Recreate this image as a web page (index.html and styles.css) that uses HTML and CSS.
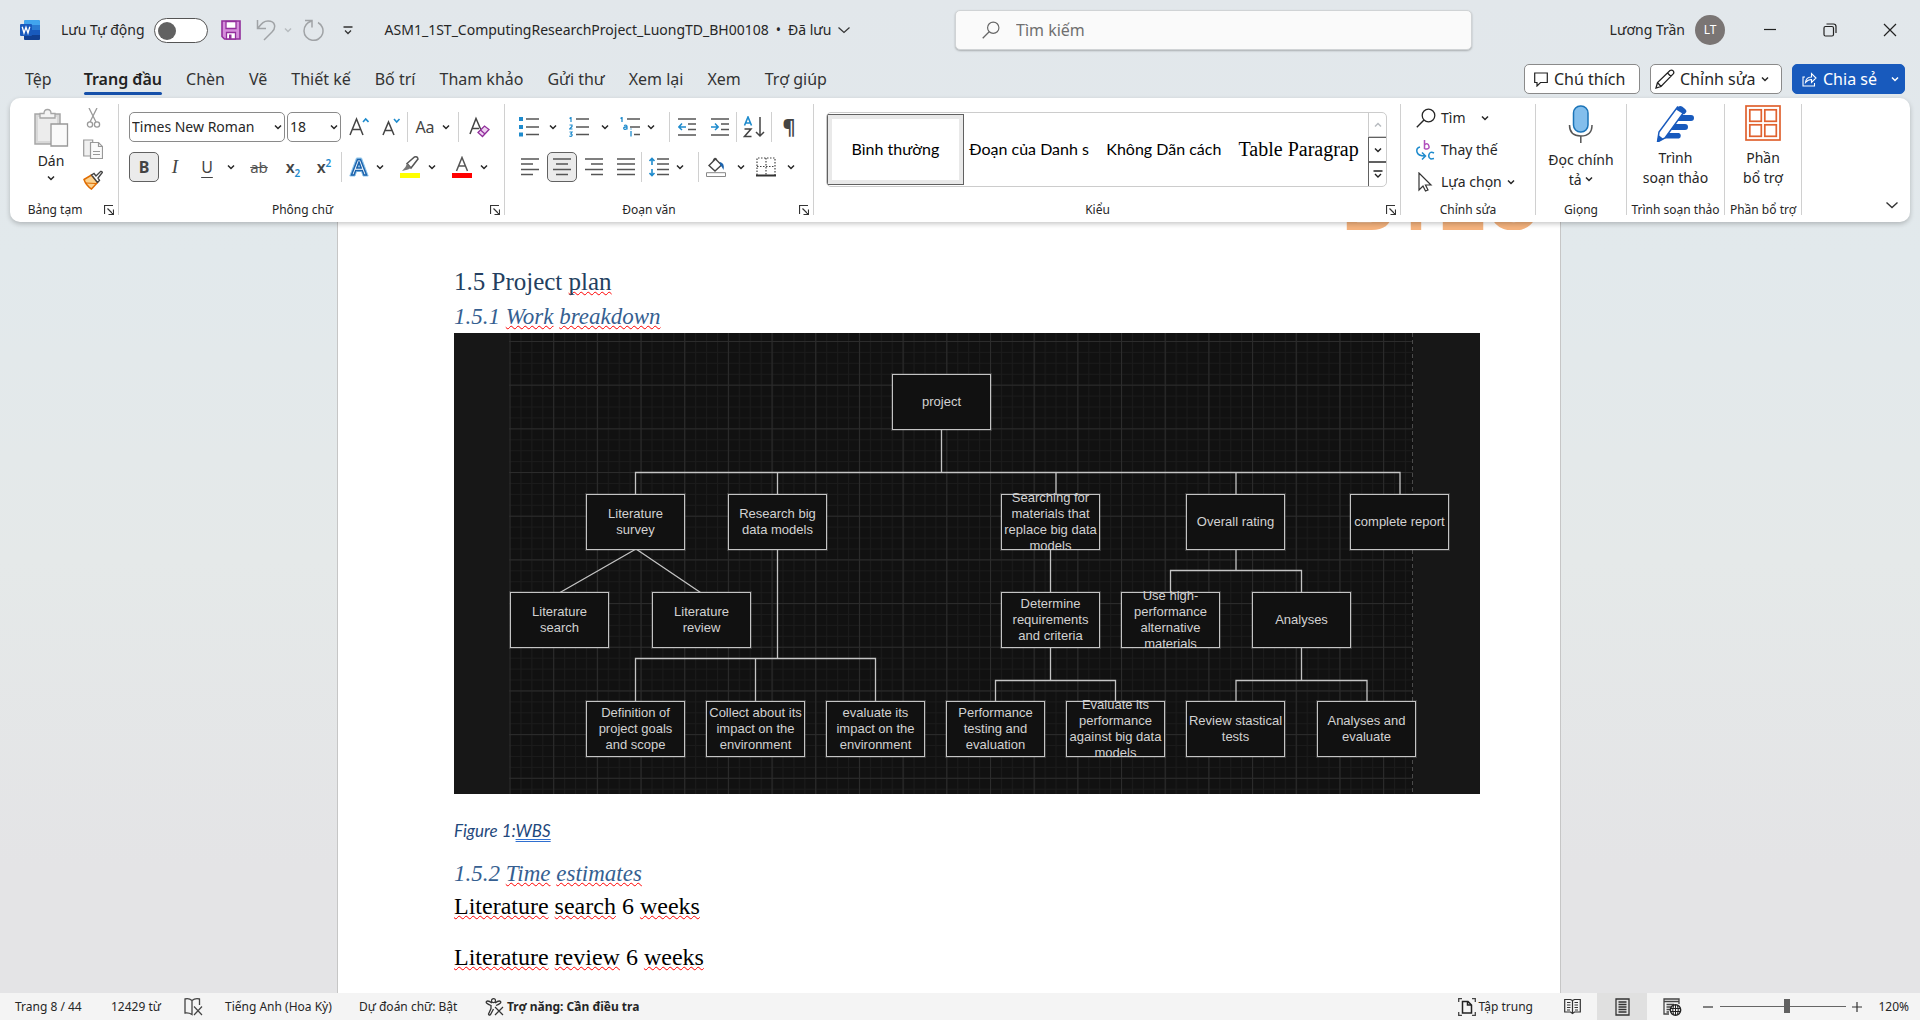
FILE: index.html
```html
<!DOCTYPE html>
<html lang="vi">
<head>
<meta charset="utf-8">
<meta name="viewport" content="width=device-width, initial-scale=1">
<title>ASM1_1ST_ComputingResearchProject_LuongTD_BH00108 - Word</title>
<link rel="stylesheet" href="styles.css">
</head>
<body>
<svg class="defs" width="0" height="0" aria-hidden="true">
  <symbol id="chev" viewBox="0 0 8 8"><path d="M1 2.5 4 5.5 7 2.5" fill="none" stroke="currentColor" stroke-width="1.5"/></symbol>
  <symbol id="launch" viewBox="0 0 10 10"><path d="M.5 9V.5H9M3.500 3.500 9 9M9.500 4.500V9.500H4.500" fill="none" stroke="#333" stroke-width="1.200"/></symbol>
  <symbol id="lens" viewBox="0 0 20 20"><circle cx="12.500" cy="7.500" r="6.300" fill="none" stroke="currentColor" stroke-width="1.300"/><path d="M8 12 .8 19.200" stroke="currentColor" stroke-width="1.400"/></symbol>
</svg>
<div class="app">
  <header class="titlebar">
    <div class="title-left">
      <svg class="word" width="20" height="20" viewBox="0 0 20 20"><rect x="4" width="16" height="20" rx="1.500" fill="#2b7cd3"/><path d="M4 1.500Q4 0 5.500 0h13Q20 0 20 1.500V5H4z" fill="#41a5ee"/><path d="M4 5h16v5H4z" fill="#2b7cd3"/><path d="M4 10h16v5H4z" fill="#185abd"/><path d="M4 15h16v3.500q0 1.500-1.500 1.500h-13Q4 20 4 18.500z" fill="#103f91"/><rect y="4" width="12" height="12" rx="1" fill="#185abd"/><path d="M2.200 6.800 4 13 6 7.200 8 13 9.800 6.800" fill="none" stroke="#fff" stroke-width="1.300"/></svg>
      <label class="autosave"><span>Lưu Tự động</span><input type="checkbox" class="toggle"></label>
      <button class="plain" aria-label="Lưu"><svg width="20" height="20" viewBox="0 0 20 20"><path d="M1 1h18v18H3.500L1 16.500z" fill="#d58edb" stroke="#922f9c" stroke-width="1.600"/><path d="M5 1.500h10v7H5z" fill="#fff" stroke="#922f9c" stroke-width="1.300"/><path d="M5.500 19v-6.500h9V19z" fill="#fff" stroke="#922f9c" stroke-width="1.300"/><path d="M8 14.500h2.500V19H8z" fill="#922f9c"/></svg></button>
      <button class="plain undo" aria-label="Hoàn tác"><svg width="20" height="22" viewBox="0 0 20 22"><path d="M1.500 1v8.500H10M2 9C6 4 8 2 12 2c8 0 8 7 4 11l-8 8" fill="none" stroke="#a0a3a6" stroke-width="1.500"/></svg><svg class="c faint" width="8" height="8"><use href="#chev"/></svg></button>
      <button class="plain redo" aria-label="Làm lại"><svg width="22" height="22" viewBox="0 0 22 22"><path d="M2 1.500h7v7M8.500 2C3 4 1 8 1 12a9.500 9.500 0 1 0 14-8.500" fill="none" stroke="#a0a3a6" stroke-width="1.500"/></svg></button>
      <button class="plain more" aria-label="Tùy chỉnh"><svg width="10" height="9" viewBox="0 0 10 9"><path d="M.5 1h9M2 4.500l3 3 3-3" fill="none" stroke="#333" stroke-width="1.300"/></svg></button>
      <button class="plain filename">ASM1_1ST_ComputingResearchProject_LuongTD_BH00108 <span class="dot">•</span> Đã lưu<svg width="12" height="8" viewBox="0 0 12 8"><path d="M.5 1.500 6 6.500l5.500-5" fill="none" stroke="#333" stroke-width="1.200"/></svg></button>
    </div>
    <label class="search"><svg width="18" height="18"><use href="#lens"/></svg><input type="text" placeholder="Tìm kiếm" aria-label="Tìm kiếm"></label>
    <div class="title-right">
      <span>Lương Trần</span><span class="avatar">LT</span>
      <button class="plain win" aria-label="Thu nhỏ"><svg width="14" height="14" viewBox="0 0 14 14"><path d="M1 6.500h12" stroke="#222" stroke-width="1.200"/></svg></button>
      <button class="plain win" aria-label="Khôi phục"><svg width="14" height="14" viewBox="0 0 14 14"><rect x="1" y="3.500" width="9.500" height="9.500" rx="1.500" fill="none" stroke="#222" stroke-width="1.200"/><path d="M3.500 1h7q2.500 0 2.500 2.500V10" fill="none" stroke="#222" stroke-width="1.200"/></svg></button>
      <button class="plain win" aria-label="Đóng"><svg width="14" height="14" viewBox="0 0 14 14"><path d="M1 1l12 12M13 1 1 13" stroke="#222" stroke-width="1.200"/></svg></button>
    </div>
  </header>

  <nav class="tabs">
    <button class="tab first">Tệp</button><button class="tab active">Trang đầu</button><button class="tab">Chèn</button><button class="tab">Vẽ</button><button class="tab">Thiết kế</button><button class="tab">Bố trí</button><button class="tab">Tham khảo</button><button class="tab">Gửi thư</button><button class="tab">Xem lại</button><button class="tab">Xem</button><button class="tab">Trợ giúp</button>
    <div class="tab-actions">
      <button class="pill comment"><svg width="14" height="15" viewBox="0 0 14 15"><path d="M.7 1h12.600v9.500H6.500L3 14v-3.500H.7z" fill="none" stroke="#222" stroke-width="1.200"/></svg>Chú thích</button>
      <button class="pill edit"><svg width="20" height="20" viewBox="0 0 20 20"><path d="M1 19l1.500-5.500L15 1.500q1.800-1 3.200.4 1.200 1.500 0 3L6 17.500zM2.500 13.500 6 17.500M12.500 4l3.500 3.500" fill="none" stroke="#222" stroke-width="1.300"/></svg>Chỉnh sửa<svg width="8" height="8"><use href="#chev"/></svg></button>
      <button class="pill share"><svg width="15" height="15" viewBox="0 0 15 15"><path d="M3 5H1v9h11.500v-3M3.500 10.500Q4 5 9.500 5V1.500L14 6 9.500 10.500V7.500Q6 7.500 3.500 10.500z" fill="none" stroke="#fff" stroke-width="1.100"/></svg>Chia sẻ<svg class="end" width="8" height="8"><use href="#chev"/></svg></button>
    </div>
  </nav>

  <section class="ribbon" aria-label="Trang đầu">
    <div class="group clipboard">
      <div class="body row-body">
        <button class="big paste"><svg width="36" height="40" viewBox="0 0 36 40"><path d="M2 6h25v30H2z" fill="#d8d8d8" stroke="#a6a6a6" stroke-width="1.500"/><path d="M5 9h19v24H5z" fill="#ececec"/><path d="M7 10V5.500h4Q11 1.500 14.500 1.500T18 5.500h4V10z" fill="#f3f3f3" stroke="#a6a6a6" stroke-width="1.300"/><path d="M18 16h16.500v22H18z" fill="#fafafa" stroke="#999" stroke-width="1.300"/></svg><span>Dán</span><svg width="8" height="8"><use href="#chev"/></svg></button>
        <div class="stack">
          <button class="ib" aria-label="Cắt"><svg width="20" height="20" viewBox="0 0 20 20"><path d="M6 0l7 14M14 0 7 14" stroke="#999" stroke-width="1.300"/><g fill="none" stroke="#999" stroke-width="1.300"><circle cx="7" cy="16.500" r="2.600"/><circle cx="14" cy="16.500" r="2.600"/></g></svg></button>
          <button class="ib" aria-label="Sao chép"><svg width="20" height="20" viewBox="0 0 20 20"><path d="M.7 1h9v16h-9z" fill="#f0f0f0" stroke="#999" stroke-width="1.200"/><path d="M7.500 3.500h8l4 4v12h-12z" fill="#fafafa" stroke="#999" stroke-width="1.200"/><path d="M15.500 3.500v4h4M10 12.500h7M10 15.500h7" fill="none" stroke="#999" stroke-width="1.200"/></svg></button>
          <button class="ib" aria-label="Bút chép định dạng"><svg width="20" height="20" viewBox="0 0 20 20"><path d="M1 9.500 8.500 5l6 7.500-6 6.500Q3 15.500 1 9.500z" fill="#fbd28f" stroke="#e06c00" stroke-width="1.500"/><path d="M3 13l10 .5" stroke="#e06c00"/><path d="M8.500 5 11 3.500l2 2.500 4.500-4.500q1.500-.5 1.800 1L15 8l1.500 2.500-2 2z" fill="#fff" stroke="#444" stroke-width="1.400"/></svg></button>
        </div>
      </div>
      <div class="glabel has"><span>Bảng tạm</span><button class="launch" aria-label="Bảng tạm"><svg width="10" height="10"><use href="#launch"/></svg></button></div>
    </div>

    <div class="group font">
      <div class="body">
        <div class="line">
          <span class="combo face"><select aria-label="Phông chữ"><option>Times New Roman</option></select><svg width="8" height="8"><use href="#chev"/></svg></span>
          <span class="combo size"><select aria-label="Cỡ chữ"><option>18</option></select><svg width="8" height="8"><use href="#chev"/></svg></span>
          <button class="ib w32" aria-label="Tăng cỡ"><svg width="20" height="22" viewBox="0 0 20 22"><path d="M1 19 7.500 3 14 19M3.500 13.500h8" fill="none" stroke="#444" stroke-width="1.500"/><path d="M14 6l2.700-3L19.500 6" fill="none" stroke="#1e8bcd" stroke-width="1.600"/></svg></button>
          <button class="ib w32" aria-label="Giảm cỡ"><svg width="20" height="22" viewBox="0 0 20 22"><path d="M2 19 7.500 6 13 19M4 14.500h7" fill="none" stroke="#444" stroke-width="1.500"/><path d="M13 3l2.700 3L18.500 3" fill="none" stroke="#1e8bcd" stroke-width="1.600"/></svg></button>
          <i class="sep"></i>
          <button class="ib w34 glyph">Aa</button><button class="ib w16 st" aria-label="Chữ hoa"><svg width="8" height="8"><use href="#chev"/></svg></button>
          <i class="sep"></i>
          <button class="ib w40" aria-label="Xóa định dạng"><svg width="21" height="22" viewBox="0 0 21 22"><path d="M1 18 7 2.500 12 14M3 12.500h7" fill="none" stroke="#444" stroke-width="1.500"/><path d="M9 16.500 15.500 10 20 13.500 13.500 20.500zM11.500 14l4.500 4" fill="#eed3f1" stroke="#922f9c" stroke-width="1.300"/></svg></button>
        </div>
        <div class="line">
          <button class="ib w30 on bold">B</button><button class="ib w32 mono-i">I</button><button class="ib w32 under">U</button><button class="ib w16" aria-label="Kiểu gạch chân"><svg width="8" height="8"><use href="#chev"/></svg></button>
          <button class="ib w40 strike">ab</button><button class="ib w28 script"><span>x<sub>2</sub></span></button><button class="ib w34 script"><span>x<sup>2</sup></span></button>
          <i class="sep"></i>
          <button class="ib w34" aria-label="Hiệu ứng chữ"><svg width="20" height="20" viewBox="0 0 20 20"><path d="M.8 19 7.500 1h5L19.200 19H14l-1.500-4.500h-5L6 19z" fill="#8fc4ea" stroke="#8fc4ea"/><path d="M2.500 18 8.500 2.500h3L17.500 18H15l-1.700-4.500H6.700L5 18zM7.800 11h4.400L10 5z" fill="#fff" stroke="#1b63ad" stroke-width="1.500"/></svg></button><button class="ib w16 st" aria-label="Hiệu ứng"><svg width="8" height="8"><use href="#chev"/></svg></button>
          <button class="ib w36" aria-label="Màu tô sáng"><svg width="20" height="22" viewBox="0 0 20 22"><path d="M7 7.500 14.500 1q3-1 3.500 2L11 12z" fill="#fff" stroke="#555" stroke-width="1.500"/><path d="M7 7.500l4 4.500-3 1.500L2 15l3.500-4z" fill="#777"/><path d="M0 17h20v5H0z" fill="#ff0"/></svg></button><button class="ib w16 st" aria-label="Màu"><svg width="8" height="8"><use href="#chev"/></svg></button>
          <button class="ib w36" aria-label="Màu chữ"><svg width="20" height="22" viewBox="0 0 20 22"><path d="M4.500 15 10 1.500 15.500 15M6.500 10h7" fill="none" stroke="#555" stroke-width="1.500"/><path d="M0 17h20v5H0z" fill="red"/></svg></button><button class="ib w16 st" aria-label="Màu"><svg width="8" height="8"><use href="#chev"/></svg></button>
        </div>
      </div>
      <div class="glabel has"><span>Phông chữ</span><button class="launch" aria-label="Phông chữ"><svg width="10" height="10"><use href="#launch"/></svg></button></div>
    </div>

    <div class="group para">
      <div class="body">
        <div class="line">
          <button class="ib w32" aria-label="Dấu đầu dòng"><svg width="20" height="20" viewBox="0 0 20 20"><path d="M0 0h4v4H0zM0 8h4v4H0zM0 15.500h4v4H0z" fill="#1e8bcd"/><path d="M7 2h13M7 10h13M7 17.500h13" stroke="#555" stroke-width="1.500"/></svg></button><button class="ib w16" aria-label="Dấu"><svg width="8" height="8"><use href="#chev"/></svg></button>
          <button class="ib w36" aria-label="Đánh số"><svg width="20" height="20" viewBox="0 0 20 20"><path d="M.5 1.500 2 .5v4.500M.5 8h2.500v1.500L.7 12H3.500M.5 15H3l-1.200 2q1.700 0 1.200 1.500T.3 19" fill="none" stroke="#1e8bcd" stroke-width="1.200"/><path d="M7 2h13M7 10h13M7 17.500h13" stroke="#555" stroke-width="1.500"/></svg></button><button class="ib w16" aria-label="Số"><svg width="8" height="8"><use href="#chev"/></svg></button>
          <button class="ib w34" aria-label="Danh sách đa mức"><svg width="20" height="20" viewBox="0 0 20 20"><path d="M.5 1.500 2 .5v4.500M4 8.500q3-1 3 1v3M7 10H5q-2 .5-1 2 1.500 1 3-.5M11 14v5.500M11 11.500v1" fill="none" stroke="#1e8bcd" stroke-width="1.300"/><path d="M7 2h13M10 10h10M14 17.500h6" stroke="#555" stroke-width="1.500"/></svg></button><button class="ib w16 st" aria-label="Mức"><svg width="8" height="8"><use href="#chev"/></svg></button>
          <i class="sep l6"></i>
          <button class="ib w34" aria-label="Giảm thụt lề"><svg width="18" height="20" viewBox="0 0 18 20"><path d="M0 2h18M10 7h8M10 12.500h8M0 18h18" stroke="#555" stroke-width="1.500"/><path d="M8 10H1M4 6.500.8 10 4 13" fill="none" stroke="#1e8bcd" stroke-width="1.500"/></svg></button><button class="ib w32" aria-label="Tăng thụt lề"><svg width="18" height="20" viewBox="0 0 18 20"><path d="M0 2h18M10 7h8M10 12.500h8M0 18h18" stroke="#555" stroke-width="1.500"/><path d="M0 10h7M4 6.500 7.200 10 4 13" fill="none" stroke="#1e8bcd" stroke-width="1.500"/></svg></button>
          <i class="sep"></i>
          <button class="ib w34" aria-label="Sắp xếp"><svg width="22" height="22" viewBox="0 0 22 22"><path d="M1.500 9.500 5 1l3.500 8.500M2.500 7h5" fill="none" stroke="#1e8bcd" stroke-width="1.600"/><path d="M1.500 13H8l-6.500 7.500H8.500M17 1v19M13 16l4 4 4-4" fill="none" stroke="#444" stroke-width="1.500"/></svg></button>
          <i class="sep"></i>
          <button class="ib w34 pilcrow">¶</button>
        </div>
        <div class="line">
          <button class="ib w34" aria-label="Căn trái"><svg width="18" height="20" viewBox="0 0 18 20"><path d="M0 2h18M0 7h12M0 12.500h18M0 17.500h12" stroke="#555" stroke-width="1.500"/></svg></button><button class="ib w30 on" aria-label="Căn giữa"><svg width="18" height="20" viewBox="0 0 18 20"><path d="M0 2h18M3 7h12M0 12.500h18M3 17.500h12" stroke="#555" stroke-width="1.500"/></svg></button><button class="ib w34" aria-label="Căn phải"><svg width="18" height="20" viewBox="0 0 18 20"><path d="M0 2h18M6 7h12M0 12.500h18M6 17.500h12" stroke="#555" stroke-width="1.500"/></svg></button><button class="ib w30" aria-label="Căn đều"><svg width="18" height="20" viewBox="0 0 18 20"><path d="M0 2h18M0 7h18M0 12.500h18M0 17.500h18" stroke="#555" stroke-width="1.500"/></svg></button>
          <i class="sep"></i>
          <button class="ib w34" aria-label="Giãn cách"><svg width="20" height="20" viewBox="0 0 20 20"><path d="M3 1.500V8M.5 4 3 1.500 5.500 4M3 12v6.500M.5 16 3 18.500 5.500 16" fill="none" stroke="#1e8bcd" stroke-width="1.600"/><path d="M8 2h12M8 7h12M8 12.500h12M8 17.500h12" stroke="#555" stroke-width="1.500"/></svg></button><button class="ib w16 st" aria-label="Cách"><svg width="8" height="8"><use href="#chev"/></svg></button>
          <i class="sep l6"></i>
          <button class="ib w34" aria-label="Tô bóng"><svg width="20" height="20" viewBox="0 0 20 20"><path d="M3 8.500 9.500 2l6 6L9 14zM7 4.500Q9-1 11 3.500" fill="none" stroke="#444" stroke-width="1.400"/><path d="M14 5q5 1 3.500 8-1-3-3.500-5z" fill="#1b63ad"/><path d="M.5 15.700h19v3.800H.5z" fill="#fff" stroke="#888"/></svg></button><button class="ib w16" aria-label="Bóng"><svg width="8" height="8"><use href="#chev"/></svg></button>
          <button class="ib w34" aria-label="Viền"><svg width="20" height="20" viewBox="0 0 20 20"><path d="M1 18V1h18v17M10 1v17M1 9.500h18" fill="none" stroke="#444" stroke-width="1.200" stroke-dasharray="1.500 1.500"/><path d="M0 18.500h20" stroke="#333" stroke-width="2"/></svg></button><button class="ib w16" aria-label="Kiểu viền"><svg width="8" height="8"><use href="#chev"/></svg></button>
        </div>
      </div>
      <div class="glabel has"><span>Đoạn văn</span><button class="launch" aria-label="Đoạn văn"><svg width="10" height="10"><use href="#launch"/></svg></button></div>
    </div>

    <div class="group styles">
      <div class="body">
        <div class="gallery">
          <button class="style sel"><span>Bình thường</span></button>
          <button class="style"><span>Đoạn của Danh s</span></button>
          <button class="style"><span>Không Dãn cách</span></button>
          <button class="style serif"><span>Table Paragrap</span></button>
          <div class="scroller">
            <button class="faint" aria-label="Lên"><svg class="up" width="8" height="8"><use href="#chev"/></svg></button>
            <button aria-label="Xuống"><svg width="8" height="8"><use href="#chev"/></svg></button>
            <button aria-label="Thêm"><svg width="10" height="9" viewBox="0 0 10 9"><path d="M.5 1h9M2 4l3 3 3-3" fill="none" stroke="#222" stroke-width="1.400"/></svg></button>
          </div>
        </div>
      </div>
      <div class="glabel has"><span>Kiểu</span><button class="launch" aria-label="Kiểu"><svg width="10" height="10"><use href="#launch"/></svg></button></div>
    </div>

    <div class="group editing">
      <div class="body">
        <button class="cmd"><svg width="20" height="20"><use href="#lens"/></svg><span>Tìm</span><svg class="far" width="8" height="8"><use href="#chev"/></svg></button>
        <button class="cmd"><svg width="20" height="20" viewBox="0 0 20 20"><path d="M8.500 0v9M8.500 5q1-1.500 2.500-1.300T13 6.300 11 9t-2.500-1" fill="none" stroke="#b04fbd" stroke-width="1.500"/><path d="M18 13q-4-2-5 1.500t2 4.500l3-.5M4 7Q0 8 1 12t8 4M6 12.500l3.500 3.500L6 19.500" fill="none" stroke="#1e8bcd" stroke-width="1.500"/></svg><span>Thay thế</span></button>
        <button class="cmd"><svg width="20" height="20" viewBox="0 0 20 20"><path d="M3 1v17l4-4 2.500 5 2.500-1-2.500-5H15z" fill="none" stroke="#333" stroke-width="1.200"/></svg><span>Lựa chọn</span><svg width="8" height="8"><use href="#chev"/></svg></button>
      </div>
      <div class="glabel"><span>Chỉnh sửa</span></div>
    </div>

    <div class="group voice">
      <div class="body"><button class="big"><svg width="26" height="40" viewBox="0 0 26 40"><rect x="5.500" y="2" width="14.500" height="26" rx="7" fill="#83beec" stroke="#1b74b8" stroke-width="1.500"/><path d="M1.500 21q0 11 11.300 11T24 21M12.800 32v7" fill="none" stroke="#555" stroke-width="1.500"/></svg><span class="two">Đọc chính<br>tả <svg width="8" height="8"><use href="#chev"/></svg></span></button></div>
      <div class="glabel"><span>Giọng</span></div>
    </div>

    <div class="group editor">
      <div class="body"><button class="big"><svg width="40" height="38" viewBox="0 0 40 38"><path d="M18 11h17a3 3 0 0 1 0 6H15M15 20h14a3 3 0 0 1 0 6H10M10 29h13a3 3 0 0 1 0 5.500H6z" fill="#185abd"/><path d="M21.500 3 28 8 9 34 1.500 38 3 28z" fill="#fff" stroke="#185abd" stroke-width="1.500"/><path d="M21 4q3-4 7 0 4 3 1.500 5L28 10.500l-8-5z" fill="#185abd"/><path d="M1 38.500 2.500 31l5 4z" fill="#185abd"/></svg><span class="two">Trình<br>soạn thảo</span></button></div>
      <div class="glabel"><span>Trình soạn thảo</span></div>
    </div>

    <div class="group addins">
      <div class="body"><button class="big"><svg width="36" height="38" viewBox="0 0 36 38"><g fill="none" stroke="#e0622f" stroke-width="1.700"><rect x="1" y="2" width="34" height="34"/><rect x="4.800" y="5.800" width="11.500" height="11.500"/><rect x="19.800" y="5.800" width="11.500" height="11.500"/><rect x="4.800" y="20.800" width="11.500" height="11.500"/><rect x="19.800" y="20.800" width="11.500" height="11.500"/></g></svg><span class="two">Phần<br>bổ trợ</span></button></div>
      <div class="glabel"><span>Phần bổ trợ</span></div>
    </div>

    <div class="ribbon-end"><button class="plain" aria-label="Thu gọn"><svg width="12" height="8" viewBox="0 0 12 8"><path d="M.5 1.500 6 6.500l5.500-5" fill="none" stroke="#333" stroke-width="1.400"/></svg></button></div>
  </section>

  <main class="workspace">
    <article class="page">
      <div class="logo"><span>BTEC</span></div>
      <h1>1.5 Project <u>plan</u></h1>
      <h2>1.5.1 <u>Work</u> <u>breakdown</u></h2>
      <figure>
        <div class="wbs">
          <svg class="edges" width="1026" height="461" viewBox="0 0 1026 461">
            <defs>
              <pattern id="minor" width="10.920" height="10.920" patternUnits="userSpaceOnUse" x="55.500" y="8"><path d="M.5 0v11M0 .5h11" stroke="#1b1b1b" fill="none"/></pattern>
              <pattern id="major" width="43.680" height="43.680" patternUnits="userSpaceOnUse" x="55.500" y="8"><path d="M.5 0v44M0 .5h44" stroke="#2c2c2c" fill="none"/></pattern>
            </defs>
            <rect width="1026" height="461" fill="#171717"/>
            <rect x="55" width="904" height="461" fill="#111"/>
            <rect x="55" width="904" height="461" fill="url(#minor)"/>
            <rect x="55" width="904" height="461" fill="url(#major)"/>
            <path d="M958.500 0v461" stroke="#4a4a4a" stroke-dasharray="4 3"/>
            <path d="M487.500 96v43.500M181.500 161v-21.500H946V161M323.500 140v21M602 140v21M782 140v21M182 216l-76 43.500M182 216l64.500 43.500M323.500 216v109M181.500 368v-42.500H421.500V368M301.500 325v43M596.500 216v43M596.500 314v33M541.500 368v-20.500H661.500V368M782 216v21.500M716.500 259v-21.500H847.500V259M847.500 314v33M782 368v-20.500H913V368" fill="none" stroke="#c4c4c4" stroke-width="1.300"/>
          </svg>
          <div class="node" style="left:438px;top:41px">project</div>
          <div class="node" style="left:132px;top:161px">Literature<br>survey</div>
          <div class="node" style="left:274px;top:161px">Research big data models</div>
          <div class="node" style="left:547px;top:161px">Searching for materials that replace big data models</div>
          <div class="node" style="left:732px;top:161px">Overall rating</div>
          <div class="node" style="left:896px;top:161px">complete report</div>
          <div class="node" style="left:56px;top:259px">Literature<br>search</div>
          <div class="node" style="left:198px;top:259px">Literature<br>review</div>
          <div class="node" style="left:547px;top:259px">Determine requirements and criteria</div>
          <div class="node" style="left:667px;top:259px">Use high-performance alternative materials</div>
          <div class="node" style="left:798px;top:259px">Analyses</div>
          <div class="node" style="left:132px;top:368px">Definition of project goals and scope</div>
          <div class="node" style="left:252px;top:368px">Collect about its impact on the environment</div>
          <div class="node" style="left:372px;top:368px">evaluate its impact on the environment</div>
          <div class="node" style="left:492px;top:368px">Performance testing and evaluation</div>
          <div class="node" style="left:612px;top:368px">Evaluate its performance against big data models</div>
          <div class="node" style="left:732px;top:368px">Review stastical tests</div>
          <div class="node" style="left:863px;top:368px">Analyses and evaluate</div>
        </div>
        <figcaption>Figure 1:<span>WBS</span></figcaption>
      </figure>
      <h2>1.5.2 <u>Time</u> <u>estimates</u></h2>
      <p><u>Literature</u> <u>search</u> 6 <u>weeks</u></p>
      <p><u>Literature</u> <u>review</u> 6 <u>weeks</u></p>
    </article>
  </main>

  <footer class="status">
    <span class="pg">Trang 8 / 44</span><span class="words">12429 từ</span>
    <svg class="proof" width="19" height="18" viewBox="0 0 19 18"><path d="M8 2.500Q5 0 1 1v14q4-.5 7 1.500V2.500Q11 0 15.500 1v6" fill="none" stroke="#444" stroke-width="1.300"/><path d="M10 8.500l8 8.500M18 8.500 10 17" stroke="#444" stroke-width="1.200"/></svg>
    <span class="lang">Tiếng Anh (Hoa Kỳ)</span><span class="predict">Dự đoán chữ: Bật</span>
    <svg width="19" height="18" viewBox="0 0 19 18"><circle cx="8.500" cy="2.700" r="2" fill="none" stroke="#333" stroke-width="1.200"/><path d="M7 5Q3 2 1.500 3.500T6 7.500v3L3.500 16q.5 2 2 .5L8.500 11M10 5q4-3 5.500-1.500T11 7.500" fill="none" stroke="#333" stroke-width="1.300"/><path d="M10 9l8 8M18 9l-8 8" stroke="#333" stroke-width="1.200"/></svg>
    <b class="acc">Trợ năng: Cần điều tra</b>
    <div class="status-right">
      <button class="focus"><svg width="18" height="18" viewBox="0 0 18 18"><path d="M.7 4V.7H4M14 .7h3.300V4M17.300 14v3.300H14M4 17.300H.7V14" fill="none" stroke="#444" stroke-width="1.300"/><path d="M4.500 3.500H10l3.500 3.500v8h-9zM9.500 3.500V7h4" fill="none" stroke="#222" stroke-width="1.500"/></svg>Tập trung</button>
      <button class="view" aria-label="Đọc"><svg width="17" height="17" viewBox="0 0 17 17"><path d="M.7 1.500h5.800l2 1 2-1h5.800v12.500h-5.800l-2 1.500-2-1.500H.7zM8.500 2.500v13M3 4.500h3.500M3 7h3.500M3 9.500h3.500M3 12h3M10.500 4.500H14M10.500 7H14M10.500 9.500H14M11 12h3" fill="none" stroke="#333" stroke-width="1.200"/></svg></button>
      <button class="view cur" aria-label="Bố trí in"><svg width="15" height="18" viewBox="0 0 15 18"><path d="M1 1h13v16H1zM3.500 4h8M3.500 6.500h8M3.500 9h8M3.500 11.500h8M3.500 14h8" fill="none" stroke="#333" stroke-width="1.300"/></svg></button>
      <button class="view" aria-label="Bố trí web"><svg width="19" height="18" viewBox="0 0 19 18"><path d="M6 16H1V1h15v5M1 3.500h15M3.500 6.500H11M3.500 9H8M3.500 11.500H7M3.500 14H6" fill="none" stroke="#444" stroke-width="1.300"/><circle cx="12.500" cy="12" r="5.200" fill="#f4f4f4" stroke="#222" stroke-width="1.400"/><path d="M7.500 10.500h10M7.500 13.500h10M12.500 7v10M10.500 7.500q-1.500 4.500 0 9M14.500 7.500q1.500 4.500 0 9" fill="none" stroke="#222"/></svg></button>
      <button class="zb minus" aria-label="Thu nhỏ"><svg width="10" height="10" viewBox="0 0 10 10"><path d="M0 5h10" stroke="#333" stroke-width="1.200"/></svg></button>
      <input class="zoom" type="range" min="0" max="100" value="53" aria-label="Thu phóng">
      <button class="zb" aria-label="Phóng to"><svg width="10" height="10" viewBox="0 0 10 10"><path d="M0 5h10M5 0v10" stroke="#333" stroke-width="1.200"/></svg></button>
      <span class="pct">120%</span>
    </div>
  </footer>
</div>
</body>
</html>
```
FILE: styles.css
```css
* { box-sizing: border-box; }
body {
  margin: 0;
  font-family: "Noto Sans", "Open Sans", sans-serif;
  font-size: 14px;
  line-height: 20px;
  color: #262626;
  background: linear-gradient(#e2e7eb, #e2e9ec 25%, #e5e9e9 55%, #e4e4e6 85%);
}
button, input, select { font: inherit; color: inherit; margin: 0; }
button { border: 0; background: none; padding: 0; white-space: nowrap; }
svg { display: block; flex: none; }
.defs { position: absolute; }
.app { display: flex; flex-direction: column; height: 100vh; overflow: hidden; }

.titlebar { display: grid; grid-template-columns: 1fr 517px 448px; align-items: center; height: 60px; flex: none; }
.title-left { display: flex; align-items: center; padding-left: 20px; white-space: nowrap; }
.plain { display: flex; align-items: center; justify-content: center; }
.autosave { display: flex; align-items: center; gap: 9px; margin: 0 13px 0 21px; }
.toggle { appearance: none; width: 54px; height: 25px; border: 1px solid #555; border-radius: 13px; background: #fff; padding: 3px; }
.toggle::before { content: ""; display: block; width: 18px; height: 18px; border-radius: 9px; background: #616161; }
.undo { margin-left: 15px; gap: 8px; }
.faint { color: #b8bcc0; }
.redo { margin-left: 11px; }
.more { margin-left: 18px; }
.filename { margin-left: 32px; gap: 7px; }
.search { display: flex; align-items: center; gap: 16px; height: 40px; padding: 0 26px; background: #fafafa; border: 1px solid #d0d3d5; border-radius: 5px; box-shadow: 0 1px 2px rgba(0,0,0,.25); color: #666; }
.search input { flex: 1; border: 0; outline: 0; background: none; font-size: 16px; padding: 0; }
.search input::placeholder { color: #707070; opacity: 1; }
.title-right { display: flex; align-items: center; justify-content: flex-end; }
.avatar { width: 30px; height: 30px; margin: 0 15px 0 10px; border-radius: 15px; background: #7a7574; color: #fff; font-size: 12px; line-height: 30px; text-align: center; }
.win { width: 60px; height: 40px; }

.tabs { display: flex; height: 38px; flex: none; padding: 0 15px 0 13px; }
.tab { height: 36px; padding: 7px 12px 0; font-size: 16px; display: flex; flex-direction: column; align-items: center; line-height: 25px; color: #333; }
.tab.first { margin-right: 8px; }
.tab.active { font-weight: 600; color: #222; }
.tab.active::after { content: ""; align-self: stretch; height: 3px; border-radius: 2px; background: #1650aa; }
.tab-actions { display: flex; gap: 10px; margin-left: auto; padding-top: 4px; }
.pill { display: flex; align-items: center; height: 30px; border: 1px solid #8a8a8a; border-radius: 5px; background: #fff; font-size: 16px; padding: 0 9px; gap: 6px; }
.comment { width: 116px; }
.edit { width: 132px; padding: 0 4px; gap: 5px; }
.share { width: 113px; background: #185abd; border-color: #185abd; color: #fff; }
.share .end { margin-left: auto; margin-right: -4px; }

.ribbon { display: flex; position: relative; z-index: 1; flex: none; height: 124px; margin: 0 10px; background: #fff; border-radius: 10px; box-shadow: 0 2px 5px rgba(0,0,0,.22); padding: 6px 0 7px; }
.group { position: relative; display: flex; flex-direction: column; border-right: 1px solid #d0d0d0; }
.body { flex: 1; min-height: 0; }
.clipboard { width: 109px; }
.font { width: 386px; padding-left: 10px; }
.para { width: 309px; padding-left: 8px; }
.styles { flex: 1; padding: 0 13px 0 12px; }
.editing { width: 135px; }
.voice { width: 91px; }
.editor { width: 98px; }
.addins { width: 77px; }
.glabel { display: flex; flex: none; justify-content: center; font-size: 12px; line-height: 10px; height: 10px; align-items: center; white-space: nowrap; }
.has { padding-right: 18px; }
.font .glabel, .para .glabel { margin-left: -10px; }
.launch { position: absolute; right: 4px; bottom: 0; }
.row-body { display: flex; }
.big { display: flex; flex-direction: column; align-items: center; width: 100%; gap: 6px; }
.big .two svg { display: inline-block; vertical-align: 2px; }
.paste { width: 54px; margin: 4px 5px 0 14px; gap: 3px; }
.stack { display: flex; flex-direction: column; gap: 11px; padding-top: 4px; }
.line { display: flex; align-items: center; height: 30px; margin-top: 10px; }
.body .line:first-child { margin-top: 8px; }
.ib { display: flex; align-items: center; justify-content: center; flex: none; }
.line .ib { height: 30px; }
.w16 { width: 16px; } .w28 { width: 28px; } .w30 { width: 30px; } .w32 { width: 32px; } .w34 { width: 34px; } .w36 { width: 36px; } .w40 { width: 40px; }
.st { justify-content: flex-start; }
.sep { flex: none; width: 1px; height: 30px; background: #d0d0d0; }
.l6 { margin-left: 6px; }
.on { background: #ebebeb; border: 1px solid #616161; border-radius: 5px; }
.combo { display: grid; align-items: center; margin-right: 2px; flex: none; }
.combo select, .combo svg { grid-area: 1 / 1; }
.combo svg { justify-self: end; margin-right: 3px; pointer-events: none; }
.combo select { appearance: none; height: 30px; width: 100%; border: 1px solid #8a8a8a; border-radius: 5px; background: #fff; padding: 0 2px; }
.face { width: 156px; } .size { width: 54px; }
.glyph { font-size: 16px; color: #444; }
.bold { font-weight: 700; font-size: 16px; color: #444; }
.mono-i { font-family: "Liberation Serif", serif; font-style: italic; font-size: 19px; color: #444; }
.under { text-decoration: underline; text-underline-offset: 4px; font-size: 16px; color: #444; }
.strike { text-decoration: line-through; font-size: 15px; color: #555; }
.script { font-weight: 600; font-size: 16px; color: #444; }
.script sub, .script sup { font-size: 10px; color: #1e8bcd; line-height: 0; }
.pilcrow { font-size: 20px; color: #444; font-weight: 700; }
.gallery { display: flex; height: 75px; margin-top: 8px; border: 1px solid #ccc; border-radius: 5px; overflow: hidden; }
.style { flex: 1; min-width: 0; padding: 0 8px 0 4px; font-family: Lato, "Noto Sans", sans-serif; font-size: 16px; color: #000; display: flex; align-items: center; justify-content: center; }
.style span { line-height: 24px; padding-bottom: 2px; }
.sel { margin: 1px 0; padding: 0 6px; border: 1px solid #616161; box-shadow: inset 0 0 0 4px #e9e9e9; }
.serif { font-family: "Liberation Serif", serif; font-size: 20px; }
.scroller { width: 19px; display: grid; grid-template-rows: 25px 25px 25px; margin: -1px -1px -1px 0; }
.scroller button { border: 1px solid #616161; display: flex; align-items: center; justify-content: center; }
.scroller button.faint { border-color: #ccc; }
.up { transform: rotate(180deg); }
.cmd { display: flex; align-items: center; gap: 5px; height: 32px; padding-left: 15px; }
.editing .body { margin-top: -2px; }
.far { margin-left: 10px; }
.ribbon-end { width: 108px; display: flex; align-items: flex-end; justify-content: flex-end; padding: 0 12px 6px 0; }

.workspace { flex: 1; min-height: 0; overflow: hidden; padding-right: 22px; }
.page { width: 1224px; max-width: 100%; min-height: 100%; margin: 0 auto; background: #fff; border: solid #c6c6c6; border-width: 0 1px; padding: 0 80px 0 116px; }
.logo { height: 8px; display: flex; justify-content: flex-end; align-items: flex-end; overflow: hidden; margin-right: -58px; }
.logo span { font: 700 72px/50px "Liberation Sans", sans-serif; color: #f4b27d; }
.page h1, .page h2, .page p { font-family: "Liberation Serif", serif; font-weight: 400; margin: 0; }
.page h1 { font-size: 25px; line-height: 36px; color: #243f60; padding-top: 34px; }
.page h2 { font-size: 23px; line-height: 32px; font-style: italic; color: #365f91; padding-top: 1px; }
.page u { text-decoration: underline wavy #f00 1px; text-underline-offset: 1px; text-decoration-skip-ink: none; }
.page p { font-size: 24px; line-height: 32px; color: #000; }
.page p + p { margin-top: 19px; }
figure { margin: 0; }
figcaption { font-family: Lato, "Noto Sans", sans-serif; font-style: italic; font-size: 17px; line-height: 24px; color: #1f497d; margin: 25px 0 14px; }
figcaption span { text-decoration: underline double #2f6fd0 1px; text-underline-offset: 2px; }
.wbs { position: relative; width: 1026px; height: 461px; }
.node { position: absolute; width: 99px; height: 56px; border: 1px solid #c4c4c4; outline: 1px solid rgba(190,190,190,.2); background: #111; color: #d2d2d2; font: 13px/16px "Liberation Sans", sans-serif; display: flex; align-items: center; justify-content: center; text-align: center; }

.status { display: flex; align-items: center; flex: none; height: 27px; background: #f4f4f4; padding: 0 11px 0 15px; font-size: 12px; white-space: nowrap; }
.pg { width: 96px; }
.words { width: 73px; }
.proof { margin-right: 22px; }
.lang { width: 134px; }
.predict { width: 126px; }
.acc { font-weight: 700; margin-left: 3px; }
.status-right { display: flex; align-items: center; margin-left: auto; height: 27px; }
.focus { display: flex; align-items: center; gap: 3px; margin-right: 14px; }
.view { width: 50px; height: 27px; display: flex; align-items: center; justify-content: center; }
.cur { background: #e0e0e0; }
.minus { margin-left: 6px; }
.zoom { appearance: none; background: none; width: 126px; height: 20px; margin: 0 6px 0 7px; }
.zoom::-webkit-slider-runnable-track { height: 1px; background: #666; }
.zoom::-webkit-slider-thumb { appearance: none; width: 6px; height: 14px; margin-top: -7px; background: #616161; }
.pct { width: 32px; margin-left: 15px; text-align: right; }
```
